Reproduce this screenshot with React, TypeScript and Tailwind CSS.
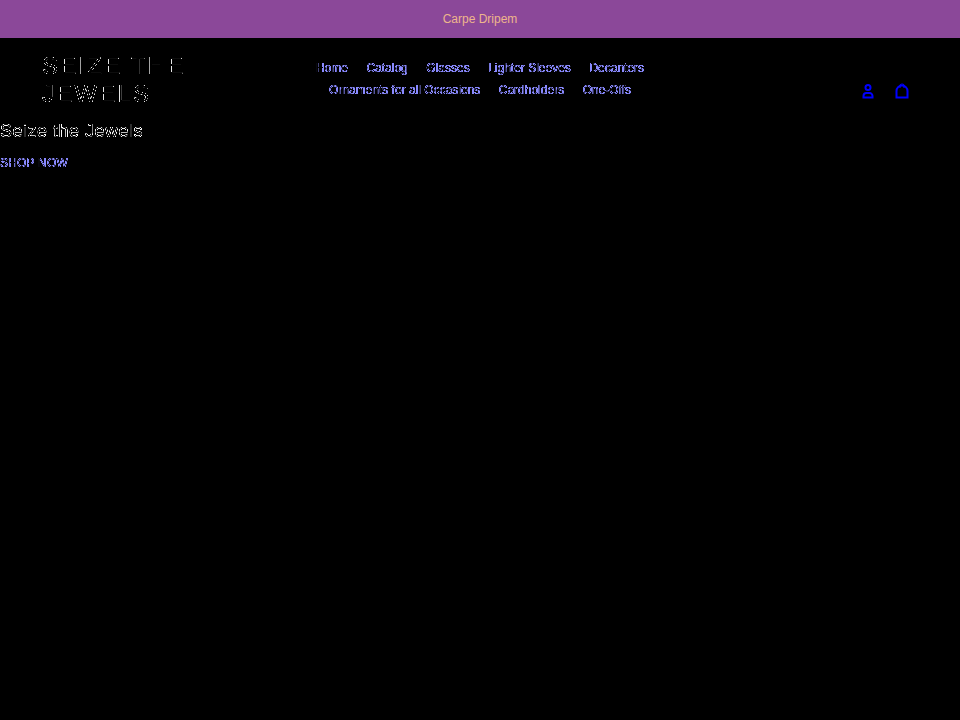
const navRows = [
  ['Home', 'Catalog', 'Glasses', 'Lighter Sleeves', 'Decanters'],
  ['Ornaments for all Occasions', 'Cardholders', 'One-Offs'],
];

export default function App() {
  return (
    <div className="min-h-screen bg-black font-['Liberation_Sans',Arial,sans-serif]">
      {/* keep only the soft edge pixels of the glyphs, the stems stay black */}
      <svg width="0" height="0" className="absolute">
        <filter id="edges" x="0" y="0" width="100%" height="100%" colorInterpolationFilters="sRGB">
          <feComponentTransfer>
            <feFuncA type="table" tableValues="0 1 1 1 0" />
          </feComponentTransfer>
        </filter>
        <filter id="heading-edges" x="0" y="0" width="100%" height="100%" colorInterpolationFilters="sRGB">
          <feComponentTransfer>
            <feFuncA type="table" tableValues="0 0.4 1 1 0.2 0" />
          </feComponentTransfer>
        </filter>
        <filter id="logo-edges" x="0" y="0" width="100%" height="100%" colorInterpolationFilters="sRGB">
          <feComponentTransfer>
            <feFuncA type="table" tableValues="0 0 0.9 0.9 0 0" />
          </feComponentTransfer>
        </filter>
      </svg>

      {/* Announcement */}
      <div className="h-[38px] bg-[#8b4899] flex items-center justify-center text-[12px] text-[#eeb68c]">
        Carpe Dripem
      </div>

      {/* Header */}
      <header className="h-[81px] flex items-start pl-[42px] pr-[50px] pt-[14px]">
        <div className="w-[188px] text-[24px] leading-[28px] tracking-[2.2px] text-white [filter:url(#logo-edges)]">
          <div>SEIZE THE</div>
          <div>JEWELS</div>
        </div>

        <nav className="w-[500px] pt-[5px] flex flex-col items-center text-[12px] leading-[22px] text-[#8a8aff] [filter:url(#edges)]">
          {navRows.map((row, i) => (
            <div key={i} className="flex gap-[18.5px]">
              {row.map((item) => (
                <a key={item}>{item}</a>
              ))}
            </div>
          ))}
        </nav>

        <div className="ml-auto mt-[31px] flex items-center gap-[18px] text-[#0000ff]">
          <svg width="16" height="16" viewBox="0 0 16 16" fill="none" stroke="currentColor" strokeWidth="2">
            <circle cx="8" cy="4.5" r="2.5" />
            <path d="M3.5 14.5v-1.5a3 3 0 0 1 3-3h3a3 3 0 0 1 3 3v1.5z" />
          </svg>
          <svg width="16" height="16" viewBox="0 0 16 16" fill="none" stroke="currentColor" strokeWidth="2">
            <path d="M2.5 14.5v-6.5a5.5 5.5 0 0 1 11 0v6.5z" />
            <path d="M6 5V3a2 2 0 0 1 4 0v2" strokeWidth="1.2" />
          </svg>
        </div>
      </header>

      {/* Hero */}
      <section>
        <h1 className="text-[18px] leading-[24px] tracking-[0.5px] text-white [filter:url(#heading-edges)]">Seize the Jewels</h1>
        <a className="block mt-[11px] text-[12px] leading-[18px] tracking-[0.2px] text-[#8a8aff] [filter:url(#edges)]">
          SHOP NOW
        </a>
      </section>
    </div>
  );
}
